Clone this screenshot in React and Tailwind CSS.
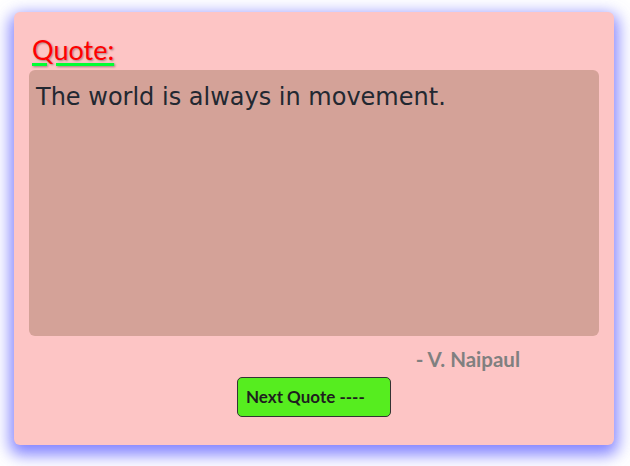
export default function App() {
  return (
    <div className="w-[630px] h-[466px] bg-white pl-[14px] pt-[12px]">
      <div className="w-[600px] h-[433px] bg-[#fdc5c5] rounded-[6px] shadow-[0_6px_16px_4px_rgba(90,90,255,0.75)] px-[15px] pt-[20px] flex flex-col">
        <h1 className="font-['Lato','Open_Sans',sans-serif] text-[27px] leading-[36px] font-normal text-[#ff0000] underline decoration-[#00ff33] decoration-[3px] underline-offset-[3px] [text-shadow:1px_1px_2px_rgba(0,0,0,0.35)] pl-[3px] mb-[2px]">
          Quote:
        </h1>
        <div className="font-['DejaVu_Sans',sans-serif] h-[266px] bg-[#d4a298] rounded-[6px] px-[7px] pt-[10px] text-[#222831] text-[24px] leading-[34px]">
          The world is always in movement.
        </div>
        <div className="font-['Lato','Open_Sans',sans-serif] text-right pr-[79px] mt-[11px] text-[20.5px] leading-[24px] font-bold text-[#808080]">
          - V. Naipaul
        </div>
        <div className="flex justify-center mt-[6px]">
          <button className="font-['Lato','Open_Sans',sans-serif] w-[154px] h-[40px] bg-[#56ed1f] border border-[#333] rounded-[5px] text-left pl-[8px] text-[17px] font-bold text-[#1e1e1e]">
            Next Quote ----
          </button>
        </div>
      </div>
    </div>
  );
}
